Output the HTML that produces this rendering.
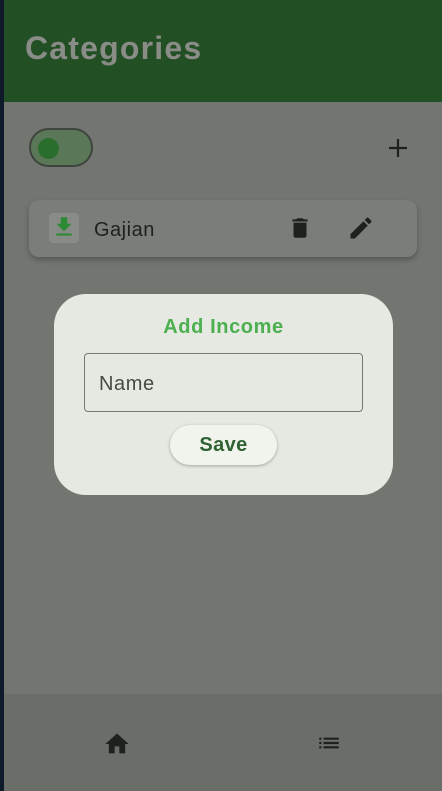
<!DOCTYPE html>
<html><head><meta charset="utf-8"><style>
*{margin:0;padding:0;box-sizing:border-box}
body{width:442px;height:791px;overflow:hidden;background:#737571;font-family:"Liberation Sans",sans-serif;position:relative}
.strip{position:absolute;left:0;top:0;width:4px;height:791px;background:#0f1a2a}
.hdr{position:absolute;left:4px;top:0;width:438px;height:102px;background:#234f25}
.hdr h1{position:absolute;left:21px;top:30px;font-size:32px;font-weight:bold;color:#8a8d87;letter-spacing:1.2px}
.tog{position:absolute;left:29px;top:128px;width:64px;height:39px;border-radius:20px;background:#5a7858;border:2.5px solid #3f443e}
.tog i{position:absolute;left:7px;top:8px;width:21px;height:21px;border-radius:50%;background:#2a6e2e}
.card{position:absolute;left:29px;top:200px;width:388px;height:57px;border-radius:10px;background:#7b7d79;box-shadow:0 3px 6px rgba(0,0,0,.25)}
.card .ic{position:absolute;left:20px;top:13px;width:30px;height:30px;border-radius:4px;background:#898b87}
.card span{position:absolute;left:65px;top:19px;font-size:20px;color:#1f211f;letter-spacing:.5px}
.dlg{position:absolute;left:54px;top:294px;width:339px;height:201px;border-radius:32px;background:#e6e8e2}
.dlg h2{position:absolute;left:0;width:100%;text-align:center;top:22px;font-size:20px;color:#4caf50;font-weight:bold;letter-spacing:.6px}
.inp{position:absolute;left:30px;top:59px;width:279px;height:59px;border:1.5px solid #767873;border-radius:4px}
.inp span{position:absolute;left:14px;top:19px;font-size:20px;color:#474945;letter-spacing:.6px}
.btn{position:absolute;left:116px;top:131px;width:107px;height:40px;border-radius:20px;background:#f1f4ec;box-shadow:0 1px 3px rgba(0,0,0,.3);text-align:center;line-height:40px;font-weight:bold;font-size:20px;color:#2f6232;letter-spacing:.4px}
.nav{position:absolute;left:4px;top:694px;width:438px;height:97px;background:#6b6d69}
</style></head><body>
<div class="strip"></div>
<div class="hdr"><h1>Categories</h1></div>
<div class="tog"><i></i></div>
<svg style="position:absolute;left:387px;top:137px" width="22" height="22" viewBox="0 0 22 22"><path d="M11 2v18M2 11h18" stroke="#1f211f" stroke-width="2.2"/></svg>
<div class="card"><div class="ic"></div>
<svg style="position:absolute;left:22px;top:13px" width="26" height="28" viewBox="0 0 24 24"><path d="M19 9h-4V3H9v6H5l7 7 7-7zM5 18v2h14v-2H5z" fill="#2d8a35"/></svg>
<span>Gajian</span>
<svg style="position:absolute;left:258px;top:13px" width="26" height="30" viewBox="0 0 24 24"><path d="M6 19c0 1.1.9 2 2 2h8c1.1 0 2-.9 2-2V7H6v12zM19 4h-3.5l-1-1h-5l-1 1H5v2h14V4z" fill="#1f211f"/></svg>
<svg style="position:absolute;left:318px;top:14px" width="28" height="28" viewBox="0 0 24 24"><path d="M3 17.25V21h3.75L17.81 9.94l-3.75-3.75L3 17.25zM20.71 7.04a1 1 0 000-1.41l-2.34-2.34a1 1 0 00-1.41 0l-1.830 1.83 3.75 3.75 1.83-1.83z" fill="#1f211f"/></svg>
</div>
<div class="dlg"><h2>Add Income</h2><div class="inp"><span>Name</span></div><div class="btn">Save</div></div>
<div class="nav">
<svg style="position:absolute;left:99px;top:36px" width="28" height="28" viewBox="0 0 24 24"><path d="M10 20v-6h4v6h5v-8h3L12 3 2 12h3v8z" fill="#1f211f"/></svg>
<svg style="position:absolute;left:312px;top:36px" width="26" height="26" viewBox="0 0 24 24"><path d="M3 13h2v-2H3v2zm0 4h2v-2H3v2zm0-8h2V7H3v2zm4 4h14v-2H7v2zm0 4h14v-2H7v2zM7 7v2h14V7H7z" fill="#1f211f"/></svg>
</div>
</body></html>
